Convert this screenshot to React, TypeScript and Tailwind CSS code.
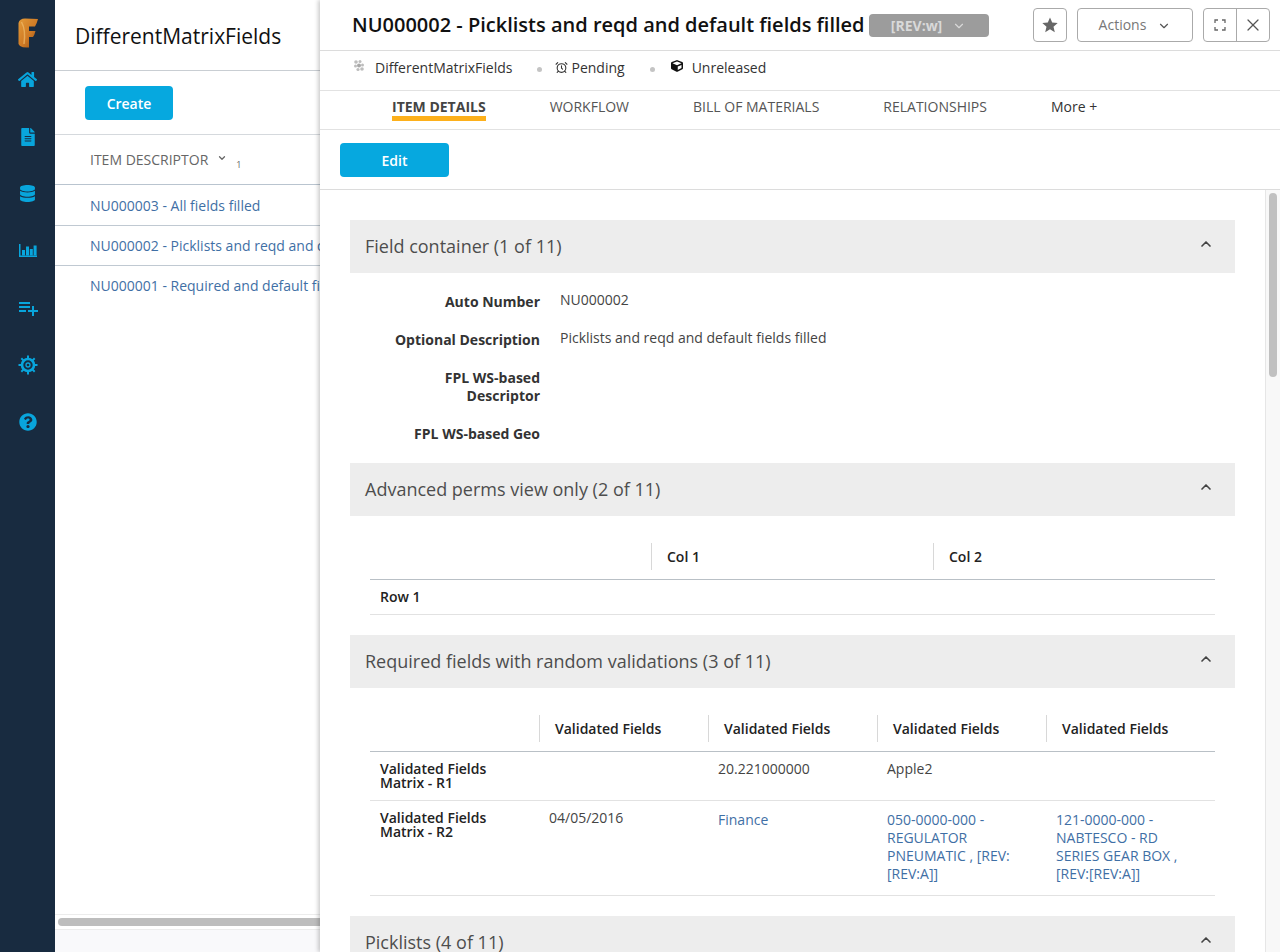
import { FaHome, FaFileAlt, FaDatabase, FaQuestionCircle, FaCube } from "react-icons/fa";
import { MdPlaylistAdd } from "react-icons/md";
import { AlarmClock, ChevronDown, ChevronUp, X } from "lucide-react";

function Logo() {
  return (
    <svg width="20" height="30" viewBox="0 0 20 30">
      <defs>
        <linearGradient id="logoGrad" x1="0" y1="0" x2="1" y2="1">
          <stop offset="0" stopColor="#e39a38" />
          <stop offset="0.55" stopColor="#cf7a25" />
          <stop offset="1" stopColor="#8f4a12" />
        </linearGradient>
      </defs>
      <path
        d="M0.5 5 Q1.5 0.5 7 0.5 L20 1 Q19 5 17 8.5 L11 8.5 L11 13 L17.5 13 Q16.5 17 15 19 L11 19 L11 29.5 Q5 30 2 28 L0.5 26 Z"
        fill="url(#logoGrad)"
      />
      <path d="M3.5 4 Q8 12 6 26" stroke="#f0bb6a" strokeWidth="1.5" fill="none" opacity="0.7" />
    </svg>
  );
}

function BarsIcon() {
  return (
    <svg width="18" height="13" viewBox="0 0 18 13" fill="#08a5dc">
      <rect x="0" y="0" width="1.5" height="13" />
      <rect x="0" y="11.5" width="18" height="1.5" />
      <rect x="3" y="6" width="3" height="5.5" />
      <rect x="7" y="2.5" width="3" height="9" />
      <rect x="10.8" y="5" width="3" height="6.5" />
      <rect x="14.6" y="1.5" width="3" height="10" />
    </svg>
  );
}

function GearIcon() {
  return (
    <svg width="20" height="20" viewBox="0 0 20 20" fill="none" stroke="#08a5dc">
      <circle cx="10" cy="10" r="6" strokeWidth="2.6" />
      <circle cx="10" cy="10" r="2" strokeWidth="1.3" />
      <path
        d="M10 0.5V3.5M10 16.5V19.5M0.5 10H3.5M16.5 10H19.5M3.3 3.3L5.4 5.4M14.6 14.6L16.7 16.7M16.7 3.3L14.6 5.4M5.4 14.6L3.3 16.7"
        strokeWidth="2"
      />
    </svg>
  );
}

function ExpandIcon() {
  return (
    <svg width="12" height="12" viewBox="0 0 12 12" fill="none" stroke="#666" strokeWidth="1.3">
      <path d="M1 4V1H4M8 1H11V4M11 8V11H8M4 11H1V8" />
    </svg>
  );
}

function StarIcon() {
  return (
    <svg width="16" height="16" viewBox="0 0 16 16" fill="#666">
      <polygon points="8,0.5 10.2,5.6 15.7,6.1 11.5,9.7 12.8,15.2 8,12.3 3.2,15.2 4.5,9.7 0.3,6.1 5.8,5.6" />
    </svg>
  );
}

function WorkspaceIcon() {
  return (
    <svg width="12" height="14" viewBox="0 0 12 14" fill="#bdbdbd" className="-mt-[3px]">
      <circle cx="3" cy="3" r="1.8" />
      <circle cx="7" cy="2.5" r="1.5" />
      <circle cx="2.5" cy="7" r="1.5" />
      <circle cx="6" cy="6.5" r="2" fill="#a8a8a8" />
      <circle cx="9.5" cy="6" r="1.5" />
      <circle cx="5" cy="10.5" r="1.6" />
      <circle cx="9" cy="10" r="1.8" />
    </svg>
  );
}

function SectionHeader({ title }: { title: string }) {
  return (
    <div className="flex h-[53px] shrink-0 items-center justify-between bg-[#ededed] pl-[15px] pr-[21px]">
      <span className="text-[18px] text-[#4d4d4d]">{title}</span>
      <ChevronUp size={16} strokeWidth={2.5} className="-mt-[5px] text-[#444]" />
    </div>
  );
}

function Field({ label, value }: { label: string; value?: string }) {
  return (
    <div className="mt-5 flex text-sm leading-[18px]">
      <div className="w-[190px] pl-[40px] text-right font-bold text-[#333]">{label}</div>
      <div className="ml-5 -mt-[2px] text-[#444]">{value}</div>
    </div>
  );
}

function HeadCell({ label }: { label?: string }) {
  return (
    <div className="flex h-[27px] items-center border-l border-[#d8d8d8] pl-[15px] text-sm font-semibold text-[#222]">
      {label}
    </div>
  );
}

const navIcons = [
  <FaHome size={19} color="#08a5dc" />,
  <FaFileAlt size={18} color="#08a5dc" />,
  <FaDatabase size={17} color="#08a5dc" />,
  <BarsIcon />,
  <MdPlaylistAdd size={24} color="#08a5dc" />,
  <GearIcon />,
  <FaQuestionCircle size={18} color="#08a5dc" />,
];

export default function App() {
  return (
    <div
      className="flex h-[952px] w-[1280px] overflow-hidden bg-white text-[#333]"
      style={{ fontFamily: '"Open Sans", sans-serif' }}
    >
      <aside className="flex w-[55px] shrink-0 flex-col items-center bg-[#182b40] pt-[18px]">
        <Logo />
        <div className="mt-[3px] flex flex-col items-center">
          {navIcons.map((icon, i) => (
            <div key={i} className="flex h-[57px] w-full items-center justify-center">
              {icon}
            </div>
          ))}
        </div>
      </aside>

      <section className="flex w-[265px] shrink-0 flex-col">
        <div className="flex h-[71px] shrink-0 items-center border-b border-[#c9ced3] pl-5 pt-[3px] text-[21px] font-medium text-[#111]">
          DifferentMatrixFields
        </div>
        <div className="flex h-[64px] shrink-0 items-center border-b border-[#d5d9dd] pl-[30px]">
          <button className="h-[34px] w-[88px] rounded-sm bg-[#06a8df] pt-[2px] text-sm font-semibold text-white">
            Create
          </button>
        </div>
        <div className="flex h-[50px] shrink-0 items-center border-b border-[#b9c4cf] pl-[35px] text-sm text-[#666]">
          ITEM DESCRIPTOR
          <ChevronDown size={10} strokeWidth={3} className="ml-[9px] -mt-[4px]" />
          <span className="ml-[9px] mt-[12px] text-[9px]">1</span>
        </div>
        <div className="flex-1 overflow-hidden text-sm text-[#3f6fa5]">
          <div className="flex h-[41px] items-center whitespace-nowrap border-b border-[#c0c9d2] pl-[35px] pt-[2px]">
            NU000003 - All fields filled
          </div>
          <div className="flex h-[40px] items-center whitespace-nowrap border-b border-[#c0c9d2] pl-[35px]">
            NU000002 - Picklists and reqd and default fields filled
          </div>
          <div className="flex h-[40px] items-center whitespace-nowrap pl-[35px]">
            NU000001 - Required and default fields filled
          </div>
        </div>
        <div className="flex h-[16px] shrink-0 items-center border-y border-[#ececec] pl-[3px]">
          <div className="h-[8px] w-full rounded-l-full bg-[#bdbdbd]" />
        </div>
        <div className="h-[22px] shrink-0 bg-[#f9f9fb]" />
      </section>

      <main className="z-10 flex min-w-0 flex-1 flex-col bg-white shadow-[-2px_0_4px_rgba(0,0,0,0.2)]">
        <header className="flex h-[51px] shrink-0 items-center border-b border-[#dcdcdc] pl-8 pr-[10px]">
          <h1 className="whitespace-nowrap text-[20px] font-semibold text-[#111]">
            NU000002 - Picklists and reqd and default fields filled
          </h1>
          <div className="ml-[4px] mt-[1px] flex h-[23px] w-[120px] items-center justify-center rounded-sm bg-[#9c9c9c] text-sm font-bold text-[#d9d9d9]">
            [REV:w]
            <ChevronDown size={14} className="ml-[10px]" />
          </div>
          <div className="ml-auto flex items-center">
            <button className="flex h-[34px] w-[34px] items-center justify-center rounded-sm border border-[#aaa]">
              <StarIcon />
            </button>
            <button className="ml-[10px] flex h-[34px] w-[116px] items-center justify-center rounded-sm border border-[#aaa] text-sm text-[#777]">
              Actions
              <ChevronDown size={14} strokeWidth={2} className="ml-[11px] mt-[2px] text-[#555]" />
            </button>
            <div className="ml-[10px] flex h-[34px] w-[67px] rounded-sm border border-[#aaa]">
              <button className="flex w-[33px] items-center justify-center border-r border-[#aaa]">
                <ExpandIcon />
              </button>
              <button className="flex w-[32px] items-center justify-center">
                <X size={20} strokeWidth={1.5} className="text-[#555]" />
              </button>
            </div>
          </div>
        </header>

        <div className="flex h-[40px] shrink-0 items-center border-b border-[#e2e2e2] pb-[6px] pl-[33px] text-sm text-[#333]">
          <WorkspaceIcon />
          <span className="ml-[10px]">DifferentMatrixFields</span>
          <span className="ml-[25px] mt-[3px] h-[5px] w-[5px] rounded-full bg-[#c4c4c4]" />
          <AlarmClock size={13} strokeWidth={2} color="#333" className="ml-[13px]" />
          <span className="ml-[3px]">Pending</span>
          <span className="ml-[25px] mt-[3px] h-[5px] w-[5px] rounded-full bg-[#c4c4c4]" />
          <FaCube size={12} color="#111" className="ml-[16px] -mt-[3px]" />
          <span className="ml-[9px]">Unreleased</span>
        </div>

        <nav className="flex h-[39px] shrink-0 border-b border-[#e2e2e2] pl-[72px] text-sm text-[#555]">
          <div className="h-[30px] border-b-[5px] border-[#fdb01b] pt-[6px] font-bold text-[#444]">ITEM DETAILS</div>
          <div className="ml-[64px] pt-[6px]">WORKFLOW</div>
          <div className="ml-[64px] pt-[6px]">BILL OF MATERIALS</div>
          <div className="ml-[64px] pt-[6px]">RELATIONSHIPS</div>
          <div className="ml-[64px] pt-[6px] text-[#333]">More +</div>
        </nav>

        <div className="flex h-[60px] shrink-0 items-center border-b border-[#dcdcdc] pl-5">
          <button className="h-[34px] w-[109px] rounded-sm bg-[#06a8df] pt-[2px] text-sm font-semibold text-white">
            Edit
          </button>
        </div>

        <div className="flex min-h-0 flex-1">
          <div className="min-w-0 flex-1 overflow-hidden pl-[30px] pr-[30px] pt-[30px]">
            <SectionHeader title="Field container (1 of 11)" />
            <Field label="Auto Number" value="NU000002" />
            <Field label="Optional Description" value="Picklists and reqd and default fields filled" />
            <Field label="FPL WS-based Descriptor" />
            <Field label="FPL WS-based Geo" />

            <div className="mt-5">
              <SectionHeader title="Advanced perms view only (2 of 11)" />
            </div>
            <div className="mx-5 mt-[27px]">
              <div className="grid grid-cols-[281px_282px_282px] border-b border-[#b9c0c6] pb-[9px]">
                <div />
                <HeadCell label="Col 1" />
                <HeadCell label="Col 2" />
              </div>
              <div className="flex h-[35px] items-center border-b border-[#e2e2e2] pl-[10px] text-sm font-semibold text-[#222]">
                Row 1
              </div>
            </div>

            <div className="mt-5">
              <SectionHeader title="Required fields with random validations (3 of 11)" />
            </div>
            <div className="mx-5 mt-[27px]">
              <div className="grid grid-cols-5 border-b border-[#b9c0c6] pb-[9px]">
                <div />
                <HeadCell label="Validated Fields" />
                <HeadCell label="Validated Fields" />
                <HeadCell label="Validated Fields" />
                <HeadCell label="Validated Fields" />
              </div>
              <div className="grid h-[49px] grid-cols-5 border-b border-[#e2e2e2] pt-[10px] text-sm text-[#444]">
                <div className="pl-[10px] pr-[20px] text-sm font-semibold leading-[14px] text-[#222]">
                  Validated Fields Matrix - R1
                </div>
                <div />
                <div className="pl-[10px] leading-[14px]">20.221000000</div>
                <div className="pl-[10px] leading-[14px]">Apple2</div>
                <div />
              </div>
              <div className="grid h-[95px] grid-cols-5 border-b border-[#e2e2e2] pt-[10px] text-sm leading-[18px]">
                <div className="pl-[10px] pr-[20px] font-semibold leading-[14px] text-[#222]">
                  Validated Fields Matrix - R2
                </div>
                <div className="pl-[10px] leading-[14px] text-[#444]">04/05/2016</div>
                <div className="pl-[10px] text-[#3f6fa5]">Finance</div>
                <div className="pl-[10px] pr-[25px] text-[#3f6fa5]">050-0000-000 - REGULATOR PNEUMATIC , [REV:[REV:A]]</div>
                <div className="pl-[10px] pr-[25px] text-[#3f6fa5]">121-0000-000 - NABTESCO - RD SERIES GEAR BOX , [REV:[REV:A]]</div>
              </div>
            </div>

            <div className="mt-5">
              <SectionHeader title="Picklists (4 of 11)" />
            </div>
          </div>
          <div className="w-[15px] shrink-0 border-l border-[#e6e6e6] bg-[#f8f8f8] pl-[3px] pt-[3px]">
            <div className="h-[184px] w-[8px] rounded-full bg-[#c0c0c0]" />
          </div>
        </div>
      </main>
    </div>
  );
}
